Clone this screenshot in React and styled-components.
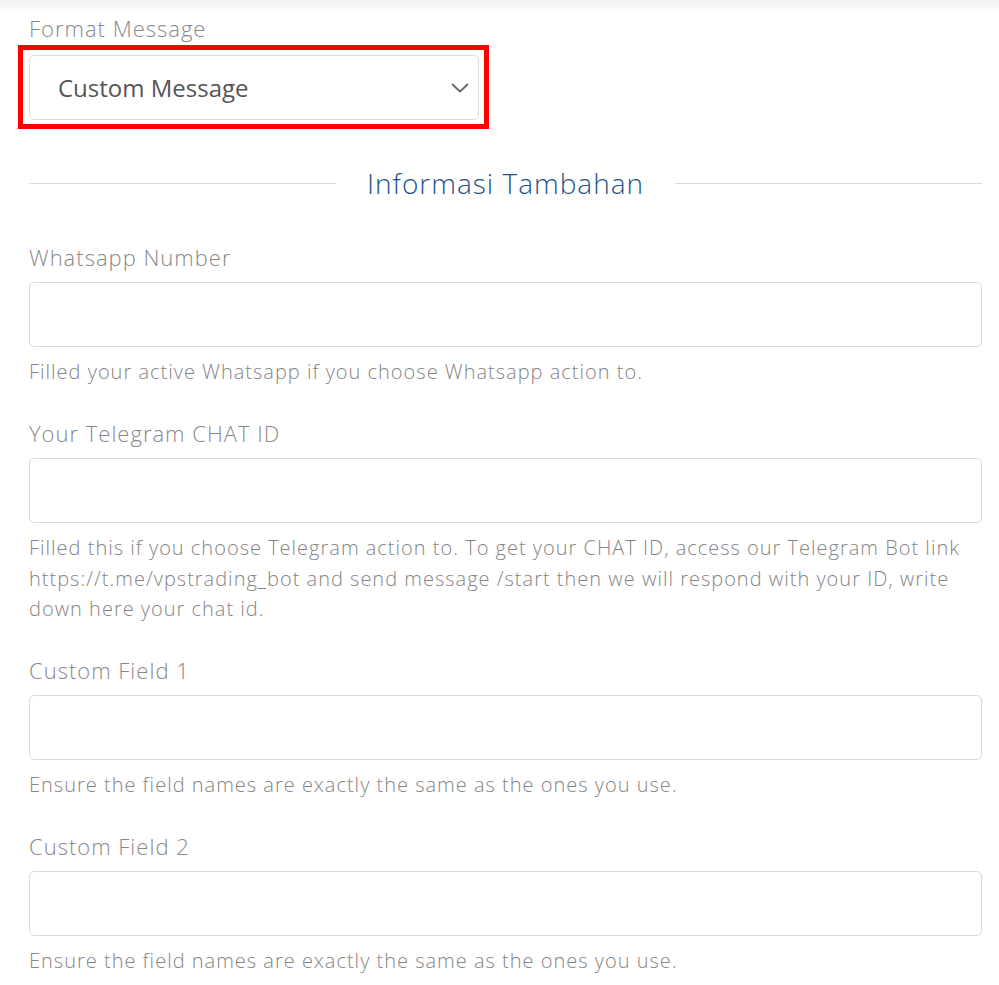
import React from "react";
import styled, { createGlobalStyle } from "styled-components";

const GlobalStyle = createGlobalStyle`
	body {
		margin: 0;
		background: #fff;
		font-family: "Open Sans", "Liberation Sans", sans-serif;
	}
`;

const colors = {
	label: "#888888",
	help: "#858585",
	border: "#dcdcdc",
	title: "#1f5481",
	selectText: "#555",
};

const Page = styled.div`
	width: 953px;
	padding: 14px 17px 0 29px;
	background: linear-gradient(#f1f1f1 0, #fff 14px);
`;

const FormGroup = styled.div`
	margin-bottom: ${(p) => (p.$last ? "0" : "31.5px")};
`;

const Label = styled.label`
	display: block;
	font-size: 22px;
	font-weight: 300;
	letter-spacing: 1px;
	line-height: 28px;
	color: ${colors.label};
	margin-bottom: ${(p) => (p.$tight ? "3px" : "11px")};
`;

const Highlight = styled.div`
	box-sizing: border-box;
	width: 471px;
	margin-left: -11px;
	border: 5px solid #ff0000;
	padding: 5px 5px 4px 6px;
`;

const SelectBox = styled.div`
	display: flex;
	align-items: center;
	justify-content: space-between;
	height: 63px;
	border: 1px solid ${colors.border};
	border-radius: 5px;
	padding: 0 9px 0 28px;
	font-size: 24px;
	color: ${colors.selectText};
	background: #fff;
`;

const Divider = styled.div`
	display: flex;
	align-items: center;
	height: 40px;
	margin: 34px 0 40px;
	&::before,
	&::after {
		content: "";
		flex: 1;
		height: 1px;
		background: ${colors.border};
	}
`;

const DividerTitle = styled.h4`
	margin: 0 31px;
	font-size: 28px;
	font-weight: 300;
	letter-spacing: 1px;
	line-height: 40px;
	color: ${colors.title};
`;

const Input = styled.input`
	display: block;
	box-sizing: border-box;
	width: 100%;
	height: 65px;
	border: 1px solid ${colors.border};
	border-radius: 5px;
	margin-bottom: 10px;
	padding: 0 16px;
	font-size: 20px;
	background: #fff;
`;

const Help = styled.p`
	margin: 0;
	font-size: 20px;
	font-weight: 300;
	letter-spacing: 1px;
	line-height: 30.5px;
	color: ${colors.help};
`;

const fields = [
	{
		label: "Whatsapp Number",
		help: "Filled your active Whatsapp if you choose Whatsapp action to.",
	},
	{
		label: "Your Telegram CHAT ID",
		help: "Filled this if you choose Telegram action to. To get your CHAT ID, access our Telegram Bot link https://t.me/vpstrading_bot and send message /start then we will respond with your ID, write down here your chat id.",
	},
	{
		label: "Custom Field 1",
		help: "Ensure the field names are exactly the same as the ones you use.",
	},
	{
		label: "Custom Field 2",
		help: "Ensure the field names are exactly the same as the ones you use.",
	},
];

function Chevron() {
	return (
		<svg width="18" height="18" viewBox="0 0 18 18" fill="none">
			<path d="M1.5 5.5 9 12.5 16.5 5.5" stroke="#666" strokeWidth="1.8" strokeLinecap="round" strokeLinejoin="round" />
		</svg>
	);
}

export default function App() {
	return (
		<>
			<GlobalStyle />
			<Page>
				<Label $tight>Format Message</Label>
				<Highlight>
					<SelectBox>
						Custom Message
						<Chevron />
					</SelectBox>
				</Highlight>
				<Divider>
					<DividerTitle>Informasi Tambahan</DividerTitle>
				</Divider>
				{fields.map((f, i) => (
					<FormGroup key={f.label} $last={i === fields.length - 1}>
						<Label>{f.label}</Label>
						<Input type="text" />
						<Help>{f.help}</Help>
					</FormGroup>
				))}
			</Page>
		</>
	);
}
